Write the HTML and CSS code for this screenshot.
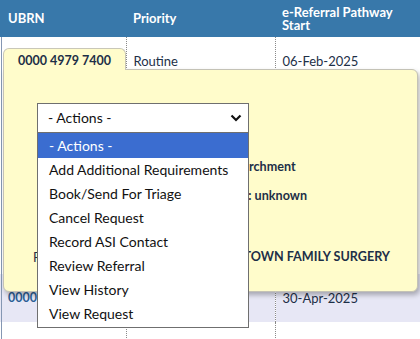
FILE: index.html
```html
<!DOCTYPE html>
<html lang="en">
<head>
<meta charset="utf-8">
<title>Referrals</title>
<link rel="stylesheet" href="styles.css">
</head>
<body>
<div class="page">
  <table class="grid">
    <colgroup><col class="w1"><col class="w2"><col class="w3"></colgroup>
    <thead>
      <tr><th>UBRN</th><th>Priority</th><th>e-Referral Pathway Start</th></tr>
    </thead>
    <tbody>
      <tr class="r1"><td class="first ubrn">0000 4979 7400</td><td>Routine</td><td>06-Feb-2025</td></tr>
      <tr class="r2"><td class="first ubrn link">0000 5121 3398</td><td>Routine</td><td>30-Apr-2025</td></tr>
      <tr class="r3"><td class="first"></td><td></td><td></td></tr>
    </tbody>
  </table>

  <div class="popup">
    <div class="tab">0000 4979 7400</div>
    <div class="panel">
      <div class="select-wrap">
        <div class="select">
          <span>- Actions -</span>
          <svg class="chev" width="12" height="8" viewBox="0 0 12 8"><path d="M1.5 1.5 L6 6 L10.5 1.5" fill="none" stroke="#111" stroke-width="2.2"/></svg>
        </div>
        <ul class="options">
          <li class="sel">- Actions -</li>
          <li>Add Additional Requirements</li>
          <li>Book/Send For Triage</li>
          <li>Cancel Request</li>
          <li>Record ASI Contact</li>
          <li>Review Referral</li>
          <li>View History</li>
          <li>View Request</li>
        </ul>
      </div>
      <div class="info">
        <div class="line indent l1"><span class="lbl">Service:</span><b>Parchment</b></div>
        <div class="line indent l2"><span class="lbl">Clinic:</span><b>ID: unknown</b></div>
        <div class="line l3"><span class="lbl">Referrer:</span><b>NEWTOWN FAMILY SURGERY</b></div>
      </div>
    </div>
  </div>
</div>
</body>
</html>
```

FILE: styles.css
```css
* { box-sizing: border-box; }
html, body { margin: 0; padding: 0; background: #fff; }
body { font-family: Lato, "Noto Sans", sans-serif; color: #1d2f47; }

.page { position: relative; width: 420px; height: 339px; overflow: hidden; }

.grid { width: 420px; border-collapse: collapse; table-layout: fixed; }
.w1 { width: 126px; }
.w2 { width: 149px; }
.w3 { width: 145px; }

.grid th {
  background: #3878aa;
  color: #fff;
  font-weight: 700;
  font-size: 13px;
  line-height: 13px;
  text-align: left;
  vertical-align: middle;
  height: 37px;
  padding: 0 7px;
}
.grid th:first-child { padding-left: 8px; }

.grid td {
  font-size: 13px;
  line-height: 18px;
  padding: 15px 7px;
  vertical-align: top;
  border-left: 1px dotted #8a8a8a;
  white-space: nowrap;
  overflow: hidden;
}
.grid td.first {
  border-left: none;
  padding-left: 8px;
  background-image: linear-gradient(90deg, transparent 1px, #8597b3 1px, #8597b3 2px, transparent 2px);
}
.grid td.ubrn { font-weight: 700; font-size: 12.5px; }
.link { color: #2b5f96; }
.r1 td { height: 237px; }
.r2 td { background-color: #e7e7f5; height: 48px; }
.r3 td { height: 30px; }

.popup { position: absolute; left: 3px; top: 48px; width: 415px; }

.tab {
  position: relative;
  z-index: 2;
  width: 123px;
  height: 22px;
  margin-bottom: -1px;
  background: #fffccb;
  border: 1px solid #c9c7b8;
  border-bottom: none;
  border-radius: 6px 6px 0 0;
  font-size: 12.5px;
  font-weight: 700;
  line-height: 18px;
  padding-top: 3px;
  text-align: center;
  color: #1d2f47;
}

.panel {
  position: relative;
  background: #fffccb;
  border: 1px solid #c4c2b6;
  border-radius: 0 6px 6px 6px;
  box-shadow: 2px 3px 5px rgba(0, 0, 0, 0.28);
  padding: 33px 0 25px 29px;
}

.select-wrap { position: relative; width: 212px; margin-left: 4px; z-index: 3; }
.select {
  height: 30px;
  background: #fff;
  border: 1px solid #6f6f6f;
  display: flex;
  align-items: center;
  justify-content: space-between;
  padding: 0 6px 2px 10px;
  font-size: 14px;
  color: #111;
}
.chev { display: block; margin-top: 2px; }

.options {
  position: absolute;
  left: 0;
  top: 30px;
  width: 212px;
  margin: 0;
  padding: 0;
  list-style: none;
  background: #fff;
  border: 1px solid #6f6f6f;
  border-top: none;
}
.options li {
  height: 24px;
  line-height: 24px;
  padding-left: 11px;
  font-size: 14px;
  color: #111;
  white-space: nowrap;
}
.options li.sel { background: #3b6dd0; color: #fff; height: 25px; line-height: 25px; }
.options li:last-child { height: 25px; }

.info { font-size: 13px; line-height: 18px; color: #1d2f47; }
.line { display: grid; grid-template-columns: 202px auto; white-space: nowrap; }
.line.indent { padding-left: 14px; grid-template-columns: 188px auto; }
.line b { font-weight: 700; font-size: 12.6px; }
.l1 { margin-top: 25px; }
.l2 { margin-top: 11px; }
.l3 { margin-top: 43px; display: flex; justify-content: space-between; padding-right: 27px; }
```
